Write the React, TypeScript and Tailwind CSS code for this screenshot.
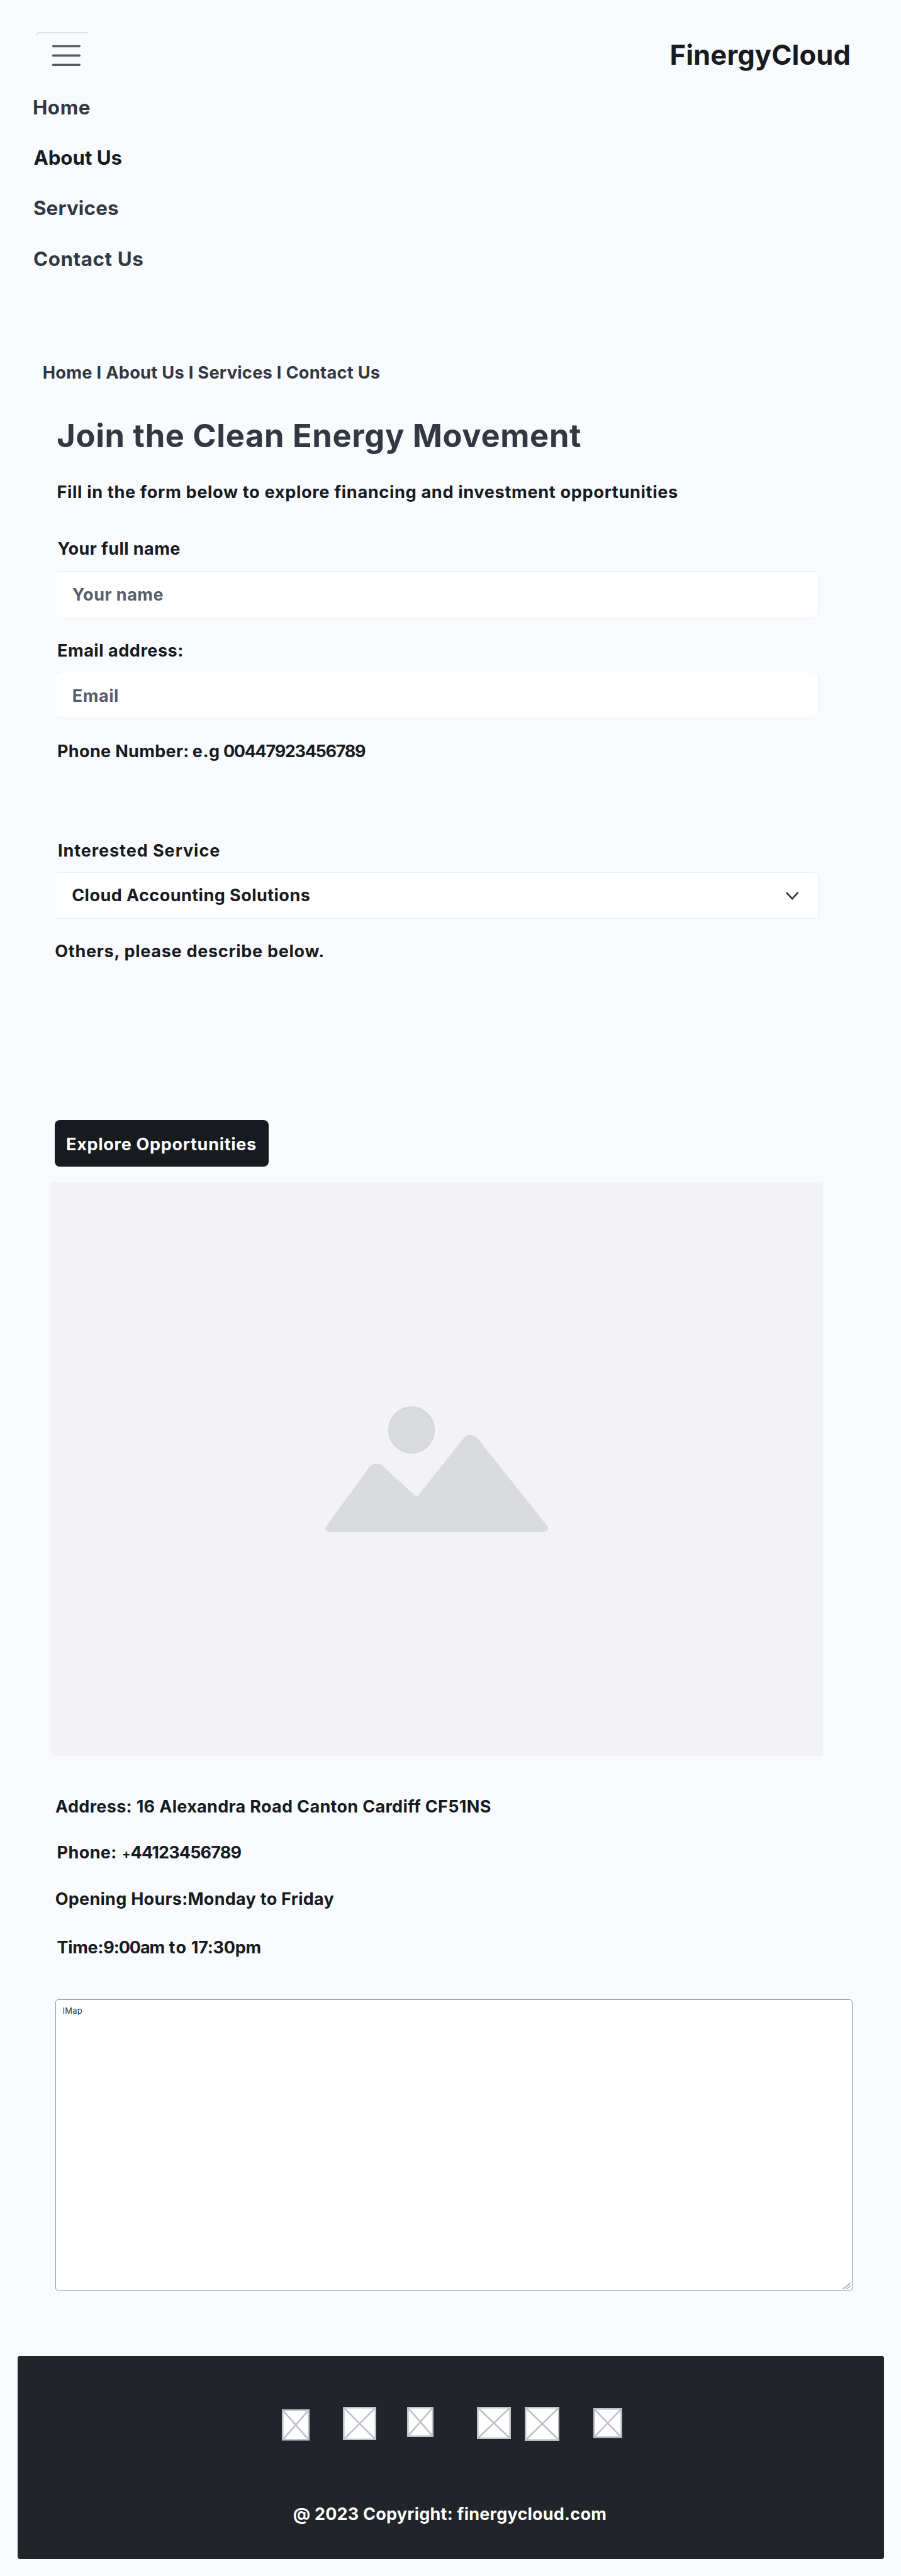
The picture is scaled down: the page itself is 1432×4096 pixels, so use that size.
const navLinks = [
  { label: "Home", cls: "text-[#323842] ml-[51.9px] tracking-[0.6px]" },
  { label: "About Us", cls: "text-[#171a1f] ml-[53.4px] tracking-[-0.06px]" },
  { label: "Services", cls: "text-[#323842] ml-[52.9px] tracking-[0.21px]" },
  { label: "Contact Us", cls: "text-[#323842] ml-[52.9px] tracking-[0.61px]" },
];

const socialBoxes = [
  { w: 44, h: 49.6, cls: "mt-[4px]" },
  { w: 53.2, h: 53.2, cls: "ml-[53px]" },
  { w: 42, h: 48, cls: "ml-[48.2px]" },
  { w: 54, h: 51.4, cls: "ml-[69.3px]" },
  { w: 55.6, h: 54, cls: "ml-[21.6px]" },
  { w: 45.8, h: 47.6, cls: "ml-[53.7px] mt-[2.3px]" },
];

function PlaceholderBox({ w, h, cls }: { w: number; h: number; cls: string }) {
  return (
    <svg width={w} height={h} viewBox={`0 0 ${w} ${h}`} className={`shrink-0 ${cls}`}>
      <rect x="1.3" y="1.3" width={w - 2.6} height={h - 2.6} fill="#fff" stroke="#bdc1ca" strokeWidth="2.6" />
      <path d={`M1.3 1.3L${w - 1.3} ${h - 1.3}M${w - 1.3} 1.3L1.3 ${h - 1.3}`} stroke="#bdc1ca" strokeWidth="2.6" />
    </svg>
  );
}

export default function App() {
  return (
    <div className="w-[1432px] h-[4096px] overflow-hidden bg-[#f8fafc] font-['Inter',sans-serif] font-bold text-[27px] leading-[32px] text-[#171a1f] whitespace-nowrap flex flex-col items-start">
      <header className="w-full h-[151px] shrink-0 pt-[51px] pl-[58px] pr-[79.8px] flex items-start justify-between">
        <button aria-label="Menu" className="relative w-[82px] h-[70px] pl-[24px] pt-[20px] flex items-start">
          <svg width="47" height="36" viewBox="0 0 47 36" stroke="#565d5f" strokeWidth="3.6" strokeLinecap="round">
            <path d="M2.5 2.5H44.3M2.5 17.3H44.3M2.5 32.2H44.3" />
          </svg>
          <svg width="82" height="6" viewBox="0 0 82 6" fill="none" className="absolute left-0 top-0">
            <path d="M0.6 4.5Q1.2 1 5 1H81" stroke="#d5d8db" strokeWidth="1.6" />
          </svg>
        </button>
        <div className="mt-[11px] h-[52px] leading-[52px] text-[43.6px] tracking-[0.11px]">FinergyCloud</div>
      </header>

      <nav className="flex flex-col gap-[40.2px]">
        {navLinks.map((l) => (
          <a key={l.label} className={`text-[31.3px] leading-[40px] ${l.cls}`}>{l.label}</a>
        ))}
      </nav>

      <div className="mt-[145.7px] ml-[67.7px] text-[27.2px] tracking-[0.28px] text-[#323842]">
        Home I About Us I Services I Contact Us
      </div>

      <h1 className="mt-[53.7px] ml-[90.2px] text-[50.6px] leading-[60px] tracking-[0.67px] text-[#323842]">
        Join the Clean Energy Movement
      </h1>
      <p className="mt-[44.4px] ml-[90.5px] text-[27.2px] tracking-[0.63px]">
        Fill in the form below to explore financing and investment opportunities
      </p>

      <form className="flex flex-col items-start">
        <label className="mt-[57.3px] ml-[91.4px] tracking-[0.43px]">Your full name</label>
        <div className="mt-[18.9px] ml-[86.8px] w-[1214.2px] h-[75.5px] pl-[27px] pt-[2px] flex items-center rounded-[8px] border border-[#ebeef2] bg-white text-[#565d6d] tracking-[0.5px]">
          Your name
        </div>
        <label className="mt-[35.6px] ml-[91px] tracking-[0.55px]">Email address:</label>
        <div className="mt-[17.1px] ml-[86.8px] w-[1214.2px] h-[74.5px] pl-[27px] pt-[4px] flex items-center rounded-[8px] border border-[#ebeef2] bg-white text-[#565d6d] tracking-[0.54px]">
          Email
        </div>
        <label className="mt-[36.8px] ml-[91px] tracking-[0.34px]">
          Phone Number: <span className="-ml-[1.7px] tracking-[0.57px]">e.g</span>{" "}
          <span className="-ml-[1.5px] tracking-[-1.32px]">00447923456789</span>
        </label>
        <label className="mt-[125.9px] ml-[91.9px] tracking-[0.94px]">Interested Service</label>
        <div className="mt-[18.1px] ml-[86.8px] w-[1214.2px] h-[74.2px] pl-[26.4px] pr-[30.6px] flex items-center justify-between rounded-[8px] border border-[#ebeef2] bg-white tracking-[0.46px]">
          Cloud Accounting Solutions
          <svg width="20" height="13" viewBox="0 0 20 13" fill="none" stroke="#323842" strokeWidth="2.7" strokeLinecap="round">
            <path d="M1.5 1.9L10.1 11L18.7 1.9" />
          </svg>
        </div>
        <label className="mt-[35.7px] ml-[87.3px] tracking-[0.72px]">Others, please describe below.</label>
        <button type="button" className="mt-[252.1px] ml-[86.8px] w-[340.1px] h-[74.2px] pl-[18.3px] pt-[4px] flex items-center rounded-[8px] bg-[#171a1f] text-white tracking-[0.71px]">
          Explore Opportunities
        </button>
      </form>

      <div className="mt-[24.6px] ml-[80.8px] w-[1227px] h-[912px] shrink-0 rounded-[4px] bg-[#f3f3f5] flex items-center justify-center">
        <svg width="354.4" height="200.2" viewBox="79.5 70.5 534.5 302">
          <ellipse cx="286.2" cy="127.3" rx="54.3" ry="54.8" fill="#dadbdf" stroke="#d5d7dd" strokeWidth="3.5" />
          <path
            fill="#dadbdf"
            d="M86 371.7Q80 369.5 80 363Q80 360 82.5 357L184.8 216.7Q192 208 202.2 208Q211 208 217.5 214.3L294 284.5Q298 287.6 302 284.3L410.3 148.5Q417.5 139.7 427.3 139.7Q437.5 139.7 444.7 148L611.5 357.5Q613.4 360 613.4 363Q613 369.5 606 371.7Z"
          />
        </svg>
      </div>

      <address className="not-italic flex flex-col items-start">
        <p className="mt-[65px] ml-[88.1px] tracking-[0.32px]">Address: 16 Alexandra Road Canton Cardiff CF51NS</p>
        <p className="mt-[40.9px] ml-[90.6px] tracking-[0.39px]">
          Phone: <span className="ml-[1.4px] text-[20px] leading-none tracking-normal">+</span>
          <span className="tracking-[-0.85px]">44123456789</span>
        </p>
        <p className="mt-[42.2px] ml-[87.7px] tracking-[0.27px]">Opening Hours:Monday to Friday</p>
        <p className="mt-[44.8px] ml-[90.4px] tracking-[-0.25px]">
          Time:<span className="tracking-[-1.06px]">9:00am</span>{" "}
          <span className="ml-[1.2px] tracking-[1.5px]">to</span> 17:30pm
        </p>
      </address>

      <div className="relative mt-[66.3px] ml-[87.5px] w-[1267.8px] h-[464px] shrink-0 rounded-[5px] border-[1.5px] border-[#9095a0] bg-white pl-[11px] pt-[9px] text-[13px] leading-[16px] font-normal text-[#323842] tracking-[0.2px]">
        IMap
        <svg width="14" height="12" viewBox="0 0 14 12" stroke="#9095a0" strokeWidth="1.3" strokeLinecap="round" className="absolute right-[1px] bottom-[1px]">
          <path d="M1 10.5L12 1.2M6.4 10.5L12 5.8" />
        </svg>
      </div>

      <footer className="mt-[102.7px] ml-[27.9px] w-[1377.3px] h-[323.4px] shrink-0 rounded-[4px] bg-[#212529] flex flex-col items-start">
        <div className="mt-[81.4px] ml-[420.4px] h-[54px] flex items-start">
          {socialBoxes.map((b, i) => (
            <PlaceholderBox key={i} {...b} />
          ))}
        </div>
        <p className="mt-[100.6px] ml-[437.8px] text-white tracking-[0.22px]">@ 2023 Copyright: finergycloud.com</p>
      </footer>
    </div>
  );
}
